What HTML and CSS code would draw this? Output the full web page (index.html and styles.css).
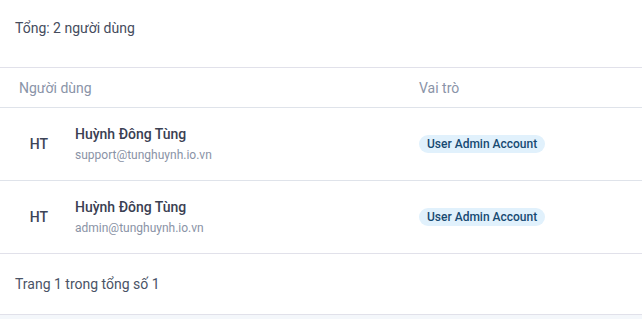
FILE: index.html
```html
<!DOCTYPE html>
<html lang="vi">
<head>
<meta charset="utf-8">
<link rel="stylesheet" href="styles.css">
</head>
<body>
<div class="card">
  <div class="summary">Tổng: 2 người dùng</div>
  <div class="table">
    <div class="row head">
      <div class="col-user">Người dùng</div>
      <div class="col-role">Vai trò</div>
    </div>
    <div class="row body">
      <div class="col-user user">
        <div class="avatar">HT</div>
        <div class="info">
          <div class="name">Huỳnh Đông Tùng</div>
          <div class="email">support@tunghuynh.io.vn</div>
        </div>
      </div>
      <div class="col-role"><span class="badge">User Admin Account</span></div>
    </div>
    <div class="row body">
      <div class="col-user user">
        <div class="avatar">HT</div>
        <div class="info">
          <div class="name">Huỳnh Đông Tùng</div>
          <div class="email">admin@tunghuynh.io.vn</div>
        </div>
      </div>
      <div class="col-role"><span class="badge">User Admin Account</span></div>
    </div>
  </div>
  <div class="footer">Trang 1 trong tổng số 1</div>
</div>
</body>
</html>
```
FILE: styles.css
```css
html, body {
  margin: 0;
  padding: 0;
  background: #f4f7fb;
}
body {
  font-family: Roboto, "Noto Sans", sans-serif;
  color: #3f4658;
}
.card {
  background: #ffffff;
  border-bottom: 1px solid #e1e1ea;
}
.summary {
  height: 67px;
  box-sizing: border-box;
  padding: 18px 15px 0;
  font-size: 14px;
  line-height: 20px;
  color: #454c5d;
}
.row {
  display: flex;
  border-top: 1px solid #e1e1ea;
}
.head {
  height: 39px;
  align-items: center;
  font-size: 14px;
  color: #8a94a8;
}
.body {
  height: 72px;
  align-items: center;
  border-top-color: #dfe3ea;
}
.col-user {
  width: 400px;
  padding-left: 19px;
  box-sizing: border-box;
}
.col-role {
  flex: 1;
  padding-left: 19px;
}
.body .col-role {
  padding-bottom: 2px;
}
.user {
  display: flex;
  align-items: center;
  gap: 16px;
}
.avatar {
  width: 40px;
  text-align: center;
  font-size: 14px;
  font-weight: 500;
  color: #3d4457;
}
.name {
  font-size: 14px;
  line-height: 20px;
  font-weight: 500;
  color: #3a4052;
}
.email {
  margin-top: 2px;
  font-size: 12px;
  line-height: 18px;
  color: #8a93a6;
}
.badge {
  display: inline-block;
  background: #e1f1fc;
  color: #174a72;
  font-size: 12px;
  font-weight: 500;
  line-height: 18px;
  padding: 0 8px;
  border-radius: 9px;
}
.footer {
  border-top: 1px solid #e1e1ea;
  height: 61px;
  box-sizing: border-box;
  padding: 20px 15px 0;
  font-size: 14px;
  line-height: 20px;
  color: #4a5366;
}
```
